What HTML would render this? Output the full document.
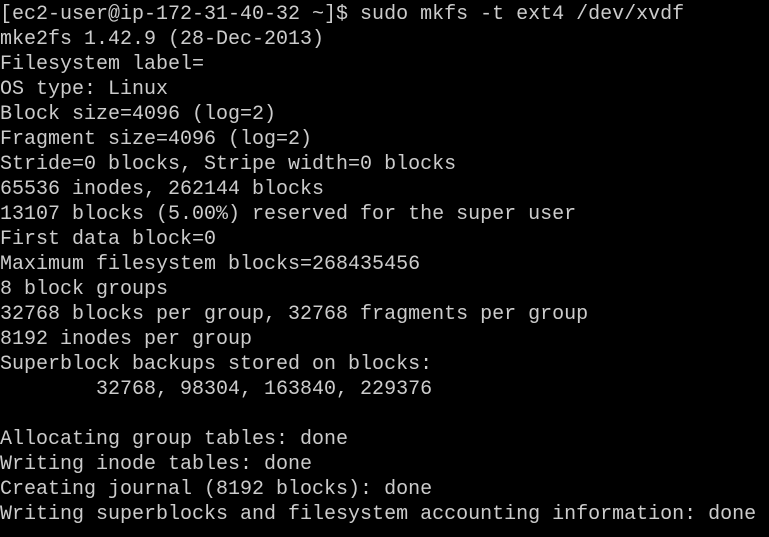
<!DOCTYPE html>
<html><head><style>
html,body{margin:0;padding:0;background:#000;width:769px;height:537px;overflow:hidden}
pre{margin:0;padding:0;font-family:"Liberation Mono",monospace;font-size:20px;line-height:25px;color:#cccccc;position:absolute;top:2px;left:0}
</style></head><body><pre>[ec2-user@ip-172-31-40-32 ~]$ sudo mkfs -t ext4 /dev/xvdf
mke2fs 1.42.9 (28-Dec-2013)
Filesystem label=
OS type: Linux
Block size=4096 (log=2)
Fragment size=4096 (log=2)
Stride=0 blocks, Stripe width=0 blocks
65536 inodes, 262144 blocks
13107 blocks (5.00%) reserved for the super user
First data block=0
Maximum filesystem blocks=268435456
8 block groups
32768 blocks per group, 32768 fragments per group
8192 inodes per group
Superblock backups stored on blocks:
        32768, 98304, 163840, 229376

Allocating group tables: done
Writing inode tables: done
Creating journal (8192 blocks): done
Writing superblocks and filesystem accounting information: done</pre></body></html>
